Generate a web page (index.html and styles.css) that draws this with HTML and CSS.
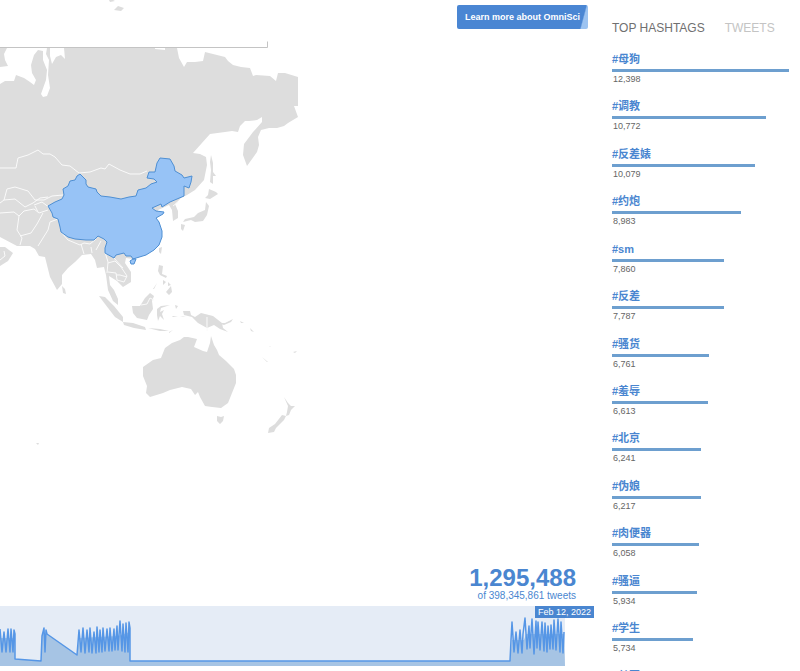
FILE: index.html
```html
<!DOCTYPE html>
<html lang="en">
<head>
<meta charset="utf-8">
<title>Tweetmap</title>
<link rel="stylesheet" href="styles.css">
</head>
<body>
<div class="app">
  <main class="main">
    <div class="stage">
      <svg class="map" viewBox="0 0 300 450" role="img" aria-label="Map with China selected">
        <g class="land">
          <path d="M109 0l4 0 2 1-5 1zM114 10l4-4 6 2-3 3z"/>
          <path d="M0 48L7 48 4 54 5 60 8 66 0 67z"/>
          <path d="M0 84L5 81 14 81 16 75 24 78 30 82 34 85 36 80 32 73 31 65 34 55 38 50 43 51 43 60 47 70 46 80 41 94 43 97 47 96 50 88 48 75 49 60 46 54 47 48 50 48 50 56 52 64 56 57 61 55 65 59 64 48 155 48 155 49 165 50 165 48 177 48 179 58 184 67 187 62 195 62 203 61 205 52 225 57 228 61 233 65 241 67 250 68 253 76 256 75 270 76 276 81 278 73 285 73 298 77 298 106 294 106 298 117 288 123 284 126 277 128 269 128 261 130 258 137 259 145 257 152 247 166 243 155 244 144 253 132 262 122 262 117 257 120 249 121 245 121 240 126 238 132 232 131 225 132 210 134 193 153 200 154 206 157 207 165 204 180 195 190 187 195 181 198 175 204 178 211 178 218 173 221 172 210 169 205 158 210 150 230 140 256 133 259 126 258 125 263 131 272 131 282 123 287 117 281 109 276 110 285 114 290 118 299 118 305 113 301 108 290 106 275 104 267 97 268 95 260 91 254 82 255 75 262 68 268 62 275 62 284 57 290 50 277 45 257 39 256 35 249 30 246 17 246 0 237z"/>
          <path d="M0 247L5 247 13 253 8 261 0 266zM62 286l3 3 1 5-3-1z"/>
          <path d="M211 155l2 8 0 9 3 4-3 0 0 8-3-2 1-12-1-8zM209 189l7 3 2 2-8 5-5-1 3-3zM206 202l3 4-2 9-4 6-8 1-4-2-8 2 2-3 9-2 4-4 7-3zM181 224l4 1-2 6-2-2z"/>
          <path d="M159 248l3-1-1 7-2-2zM159 265l4 1-1 8 5 2-1 2-6-3-2-4zM163 280l3 2-3 3zM168 282l3 3-3 1zM171 286l1 6-3 3-3-3zM157 283l-3 6-1 0z"/>
          <path d="M99 296l6 1 9 9 9 11 0 5-8-5-10-13zM123 322l10 1 12 4 1 3-12-2-10-3zM148 328l12 1 9 2-9 0zM169 332l4-2-4 3z"/>
          <path d="M132 306l8 0 5-8 5-5 4 3-2 5 1 8-4 6-2 5-10-2-4-5zM157 309l4-3 9-1-9 3-1 4 4-2-2 4 2 6-4-4-2 5-1-6zM175 305l3 1-2 3zM172 316l6 0-5 1zM180 316l6 1-3 0z"/>
          <path d="M183 311l7 0 1 4 4 2 6-4 12 3 9 7 1 5 5 4-8-3-6-4-7 3-9-5-6-6-8-2zM218 323l7 0 6-3 2-1-2 3-7 3zM240 321l4 2-3 0zM250 328l4 4-3-1zM262 357l6 5-1 0zM269 346l2 1-1 0zM293 352l4-1-2 2z"/>
          <path d="M143 367L153 360 161 358 165 348 172 343 180 340 184 337 188 337 197 339 194 347 203 351 207 352 210 343 211 336 214 345 217 350 219 355 226 361 234 369 236 375 236 383 232 393 228 403 221 408 212 407 205 406 200 397 198 392 195 395 191 389 182 387 170 390 163 393 150 397 146 393 147 386 143 376z"/>
          <path d="M217 416l4 1 3-1-1 5-3 3-3-3zM284 397l4 6 3 3 4 0-4 4-2 5-3 1 1-4 1-6zM282 415l4 1-2 4-8 8-2 4-6 1 1-5 6-4zM36 443l3 0-1 2z"/>
        </g>
        <g class="borders">
          <path d="M0 168L8 168 16 168 18 158 28 155 38 150 43 154 50 154 55 157 62 165 70 166 79 173 90 172 101 168 105 169 109 164 120 170 130 174 140 174 147 171"/>
          <path d="M63 195L52 196 44 200 35 200 28 191 15 187 7 189 4 200 0 203M4 200L15 199 25 207 33 203 40 198 48 197M34 205L42 202 50 208M38 212L35 206"/>
          <path d="M0 213L14 212 19 216 24 211 34 209 39 213 48 210M19 216L17 230 22 238 20 245M20 236L31 233 37 224 43 213M38 246L48 230 50 222 58 219"/>
          <path d="M61 232L68 240 80 245 84 243 90 244 96 239M81 244L84 254M91 247L92 253M101 241L96 250M105 252L108 262 107 273M108 263L115 261 121 267 127 276 124 282 117 280 116 273 108 272M114 258L123 268M127 277L120 275 116 275M4 251L5 256 0 260M207 317v14M141 305L147 304 150 298 154 300"/>
          <path d="M173 206l5-4"/>
        </g>
        <path class="selected" d="M80 174L83 177 86 180 86 184 88 187 96 189 97 192 101 196 110 197 121 199 129 197 136 196 138 190 146 188 151 184 157 182 154 179 147 178 149 172 155 172 157 163 160 158 170 159 174 166 175 171 182 175 184 178 192 176 191 182 189 188 184 186 184 196 177 199 170 202 162 207 161 204 152 208 156 211 164 212 163 214 156 218 159 222 162 231 162 237 159 245 154 250 146 255 133 259 131 256 126 256 124 253 116 255 114 258 105 253 105 248 107 242 104 239 98 236 94 240 86 240 75 239 68 237 61 232 60 227 58 219 53 217 52 213 48 206 55 202 62 199 64 195 63 189 68 186 70 181 75 180 77 176zM130 261L133 259 136 259 134 264 131 264z"/>
        <path class="frame" d="M0 47.5h267.500v-6"/>
      </svg>
      <a class="learn" href="#">Learn more about OmniSci</a>
    </div>
    <div class="count">
      <strong class="count-value">1,295,488</strong>
      <span class="count-total">of 398,345,861 tweets</span>
    </div>
    <div class="timeline">
      <svg class="chart" viewBox="0 0 565 60" preserveAspectRatio="none" role="img" aria-label="Tweets over time">
        <path class="area" d="M0 60V32L15 32 15 53 41 55 42 28 47 28 77 49 79 32 118 30 130 26 130 55 510 55 512 34 524 34 526 28 564 28 565 60z"/>
        <path class="line" d="M0 23L2 46 4 26 6 46 8 23 10 46 11 23 13 46 14 24 15 28 15 53 41 55 42 30 43 26 44 22 45 46 46 24 47 28 77 49 79 24 81 46 83 22 85 47 87 24 89 46 90 22 92 47 94 26 96 47 97 21 99 46 100 24 102 46 103 22 105 45 107 23 109 45 110 22 112 45 114 23 115 44 117 20 118 44 120 15 122 45 123 18 125 46 126 17 128 46 129 16 130 22 130 55 510 55 511 34 512 16 514 46 516 26 518 47 520 24 522 47 523 28 525 12 527 43 529 20 530 42 532 13 534 48 536 15 537 42 538 16 540 44 542 16 544 45 545 17 547 46 548 20 550 43 551 19 553 43 554 14 556 44 558 13 560 46 561 16 563 47 564 26"/>
      </svg>
      <output class="date">Feb 12, 2022</output>
    </div>
  </main>
  <aside class="side">
    <div class="tabs">
      <button class="tab active" type="button">TOP HASHTAGS</button>
      <button class="tab" type="button">TWEETS</button>
    </div>
    <ol class="tags">
      <li><a href="#">#母狗</a><div class="bar"></div><span>12,398</span></li>
      <li><a href="#">#调教</a><div class="bar" style="width:87%"></div><span>10,772</span></li>
      <li><a href="#">#反差婊</a><div class="bar" style="width:81%"></div><span>10,079</span></li>
      <li><a href="#">#约炮</a><div class="bar" style="width:73%"></div><span>8,983</span></li>
      <li><a href="#">#sm</a><div class="bar" style="width:63%"></div><span>7,860</span></li>
      <li><a href="#">#反差</a><div class="bar" style="width:63%"></div><span>7,787</span></li>
      <li><a href="#">#骚货</a><div class="bar" style="width:55%"></div><span>6,761</span></li>
      <li><a href="#">#羞辱</a><div class="bar" style="width:54%"></div><span>6,613</span></li>
      <li><a href="#">#北京</a><div class="bar" style="width:50%"></div><span>6,241</span></li>
      <li><a href="#">#伪娘</a><div class="bar" style="width:50%"></div><span>6,217</span></li>
      <li><a href="#">#肉便器</a><div class="bar" style="width:49%"></div><span>6,058</span></li>
      <li><a href="#">#骚逼</a><div class="bar" style="width:48%"></div><span>5,934</span></li>
      <li><a href="#">#学生</a><div class="bar" style="width:46%"></div><span>5,734</span></li>
      <li><a href="#">#丝图</a></li>
    </ol>
  </aside>
</div>
</body>
</html>
```
FILE: styles.css
```css
* { box-sizing: border-box; }

body {
  margin: 0;
  background: #fff;
  color: #666;
  font-family: "Liberation Sans", "Noto Sans CJK SC", sans-serif;
}

a { text-decoration: none; }

.app {
  display: grid;
  grid-template-columns: 1fr 188px;
  grid-template-rows: minmax(0, 1fr);
  height: 100vh;
  overflow: hidden;
}

.main {
  display: flex;
  flex-direction: column;
  padding-bottom: 5px;
}

.stage {
  display: flex;
  flex: 1;
  align-items: flex-start;
  justify-content: space-between;
  padding-right: 24px;
}

.map { width: 300px; flex: none; }
.land { fill: #ddd; }
.borders { fill: none; stroke: #fafafa; stroke-width: 1; }
.selected { fill: #97c3f6; stroke: #4e8fd3; stroke-width: 1; stroke-linejoin: round; }
.frame { fill: none; stroke: #c4c4c4; stroke-width: 1; }

.learn {
  margin-top: 5px;
  padding: 0 8px;
  border-radius: 2px;
  background: linear-gradient(105deg, #4a86d3 94%, #9cc3f1 95%);
  color: #fff;
  font-size: 9px;
  font-weight: 700;
  line-height: 24px;
  white-space: nowrap;
}

.count {
  display: flex;
  flex-direction: column;
  align-items: flex-end;
  padding: 0 36px 4px 0;
  color: #4a86d0;
}

.count-value { font-size: 24px; line-height: 25px; }
.count-total { font-size: 10px; line-height: 12px; }

.timeline {
  position: relative;
  height: 60px;
  margin-right: 47px;
  background: #e5ecf6;
}

.chart { display: block; width: 100%; height: 100%; }
.area { fill: #a6c4e4; }
.line { fill: none; stroke: #5596e6; stroke-width: 1.5; stroke-linejoin: round; }

.date {
  position: absolute;
  top: 0;
  right: -29px;
  padding: 0 3px;
  background: #4a86d0;
  color: #fff;
  font-size: 9px;
  line-height: 12px;
  white-space: nowrap;
}

.tabs {
  display: flex;
  gap: 20px;
  padding-top: 20px;
}

.tab {
  padding: 0;
  border: 0;
  background: none;
  color: #c4c4c4;
  font: 12px/16px "Liberation Sans", sans-serif;
  white-space: nowrap;
}

.tab.active { color: #707070; }

.tags {
  display: grid;
  grid-template-rows: repeat(14, 1fr);
  height: 664px;
  margin: 15px 0 0;
  padding: 0 11px 0 0;
  list-style: none;
}

.tags a {
  display: block;
  height: 18px;
  color: #4a86d0;
  font-size: 11px;
  font-weight: 700;
  line-height: 16px;
}

.bar { height: 3px; background: #6d9fcf; }

.tags span {
  display: block;
  padding-left: 1px;
  font-size: 9px;
  line-height: 14px;
}
```
